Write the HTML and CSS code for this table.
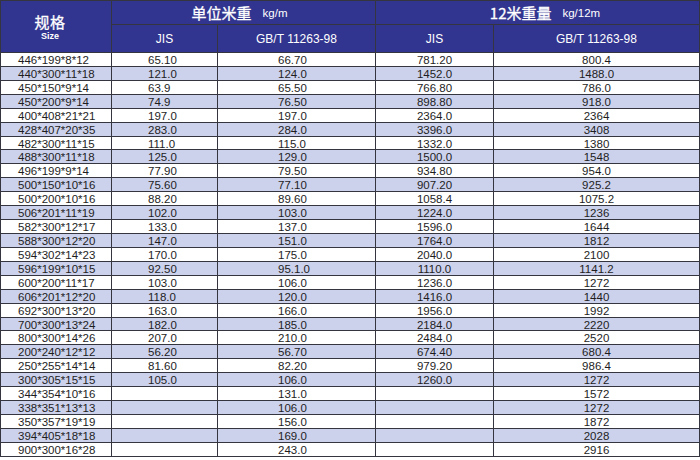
FILE: index.html
```html
<!DOCTYPE html>
<html lang="zh-CN">
<head>
<meta charset="utf-8">
<title>H型钢规格重量表</title>
<link rel="stylesheet" href="styles.css">
</head>
<body>
<div class="sheet">
  <div class="hd hd-size"><span class="cn">规格</span><span class="en">Size</span></div>
  <div class="hd hd-g1"><span class="cn">单位米重</span><span class="unit">kg/m</span></div>
  <div class="hd hd-g2"><span class="cn">12米重量</span><span class="unit">kg/12m</span></div>
  <div class="hd hd-sub">JIS</div>
  <div class="hd hd-sub">GB/T 11263-98</div>
  <div class="hd hd-sub">JIS</div>
  <div class="hd hd-sub">GB/T 11263-98</div>

  <div class="row"><div class="c1">446*199*8*12</div><div class="c2">65.10</div><div class="c3">66.70</div><div class="c4">781.20</div><div class="c5">800.4</div></div>
  <div class="row alt"><div class="c1">440*300*11*18</div><div class="c2">121.0</div><div class="c3">124.0</div><div class="c4">1452.0</div><div class="c5">1488.0</div></div>
  <div class="row"><div class="c1">450*150*9*14</div><div class="c2">63.9</div><div class="c3">65.50</div><div class="c4">766.80</div><div class="c5">786.0</div></div>
  <div class="row alt"><div class="c1">450*200*9*14</div><div class="c2">74.9</div><div class="c3">76.50</div><div class="c4">898.80</div><div class="c5">918.0</div></div>
  <div class="row"><div class="c1">400*408*21*21</div><div class="c2">197.0</div><div class="c3">197.0</div><div class="c4">2364.0</div><div class="c5">2364</div></div>
  <div class="row alt"><div class="c1">428*407*20*35</div><div class="c2">283.0</div><div class="c3">284.0</div><div class="c4">3396.0</div><div class="c5">3408</div></div>
  <div class="row"><div class="c1">482*300*11*15</div><div class="c2">111.0</div><div class="c3">115.0</div><div class="c4">1332.0</div><div class="c5">1380</div></div>
  <div class="row alt"><div class="c1">488*300*11*18</div><div class="c2">125.0</div><div class="c3">129.0</div><div class="c4">1500.0</div><div class="c5">1548</div></div>
  <div class="row"><div class="c1">496*199*9*14</div><div class="c2">77.90</div><div class="c3">79.50</div><div class="c4">934.80</div><div class="c5">954.0</div></div>
  <div class="row alt"><div class="c1">500*150*10*16</div><div class="c2">75.60</div><div class="c3">77.10</div><div class="c4">907.20</div><div class="c5">925.2</div></div>
  <div class="row"><div class="c1">500*200*10*16</div><div class="c2">88.20</div><div class="c3">89.60</div><div class="c4">1058.4</div><div class="c5">1075.2</div></div>
  <div class="row alt"><div class="c1">506*201*11*19</div><div class="c2">102.0</div><div class="c3">103.0</div><div class="c4">1224.0</div><div class="c5">1236</div></div>
  <div class="row"><div class="c1">582*300*12*17</div><div class="c2">133.0</div><div class="c3">137.0</div><div class="c4">1596.0</div><div class="c5">1644</div></div>
  <div class="row alt"><div class="c1">588*300*12*20</div><div class="c2">147.0</div><div class="c3">151.0</div><div class="c4">1764.0</div><div class="c5">1812</div></div>
  <div class="row"><div class="c1">594*302*14*23</div><div class="c2">170.0</div><div class="c3">175.0</div><div class="c4">2040.0</div><div class="c5">2100</div></div>
  <div class="row alt"><div class="c1">596*199*10*15</div><div class="c2">92.50</div><div class="c3">95.1.0</div><div class="c4">1110.0</div><div class="c5">1141.2</div></div>
  <div class="row"><div class="c1">600*200*11*17</div><div class="c2">103.0</div><div class="c3">106.0</div><div class="c4">1236.0</div><div class="c5">1272</div></div>
  <div class="row alt"><div class="c1">606*201*12*20</div><div class="c2">118.0</div><div class="c3">120.0</div><div class="c4">1416.0</div><div class="c5">1440</div></div>
  <div class="row"><div class="c1">692*300*13*20</div><div class="c2">163.0</div><div class="c3">166.0</div><div class="c4">1956.0</div><div class="c5">1992</div></div>
  <div class="row alt"><div class="c1">700*300*13*24</div><div class="c2">182.0</div><div class="c3">185.0</div><div class="c4">2184.0</div><div class="c5">2220</div></div>
  <div class="row"><div class="c1">800*300*14*26</div><div class="c2">207.0</div><div class="c3">210.0</div><div class="c4">2484.0</div><div class="c5">2520</div></div>
  <div class="row alt"><div class="c1">200*240*12*12</div><div class="c2">56.20</div><div class="c3">56.70</div><div class="c4">674.40</div><div class="c5">680.4</div></div>
  <div class="row"><div class="c1">250*255*14*14</div><div class="c2">81.60</div><div class="c3">82.20</div><div class="c4">979.20</div><div class="c5">986.4</div></div>
  <div class="row alt"><div class="c1">300*305*15*15</div><div class="c2">105.0</div><div class="c3">106.0</div><div class="c4">1260.0</div><div class="c5">1272</div></div>
  <div class="row"><div class="c1">344*354*10*16</div><div class="c2"></div><div class="c3">131.0</div><div class="c4"></div><div class="c5">1572</div></div>
  <div class="row alt"><div class="c1">338*351*13*13</div><div class="c2"></div><div class="c3">106.0</div><div class="c4"></div><div class="c5">1272</div></div>
  <div class="row"><div class="c1">350*357*19*19</div><div class="c2"></div><div class="c3">156.0</div><div class="c4"></div><div class="c5">1872</div></div>
  <div class="row alt"><div class="c1">394*405*18*18</div><div class="c2"></div><div class="c3">169.0</div><div class="c4"></div><div class="c5">2028</div></div>
  <div class="row"><div class="c1">900*300*16*28</div><div class="c2"></div><div class="c3">243.0</div><div class="c4"></div><div class="c5">2916</div></div>
</div>
</body>
</html>
```

FILE: styles.css
```css
html, body {
  margin: 0;
  padding: 0;
  background: #ffffff;
}

body {
  font-family: "Liberation Sans", Arial, sans-serif;
  color: #1e1e1e;
}

.sheet {
  width: 698px;
  padding: 1px;
  display: grid;
  grid-template-columns: 110px 105px 157px 117px 205px;
  grid-template-rows: 23px 27px;
  grid-auto-rows: 12.93px;
  gap: 1px;
  background: #35353f;
}

.hd {
  background: #32358f;
  color: #ffffff;
  display: flex;
  align-items: center;
  justify-content: center;
}

.hd-size {
  grid-row: 1 / 3;
  grid-column: 1;
  flex-direction: column;
  padding-right: 12px;
  padding-top: 1px;
}

.hd-size .cn {
  font-family: "Noto Sans CJK SC", sans-serif;
  font-weight: 400;
  font-size: 15.5px;
  line-height: 15px;
  letter-spacing: 0.5px;
  -webkit-text-stroke: 0.3px #ffffff;
}

.hd-size .en {
  font-family: "Liberation Sans", Arial, sans-serif;
  font-weight: 700;
  font-size: 9px;
  line-height: 9px;
  margin-top: 3px;
}

.hd-g1 {
  grid-column: 2 / 4;
  padding-right: 8px;
}

.hd-g2 {
  grid-column: 4 / 6;
  padding-left: 15px;
}

.hd .cn {
  font-family: "Noto Sans CJK SC", sans-serif;
  font-weight: 400;
  font-size: 15px;
  -webkit-text-stroke: 0.3px #ffffff;
}

.hd .unit {
  font-family: "Liberation Sans", Arial, sans-serif;
  font-size: 11.5px;
  margin-left: 11px;
}

.hd-sub {
  font-size: 12px;
}

.row {
  display: contents;
}

.row > div {
  background: #ffffff;
  font-size: 11.5px;
  line-height: 15px;
  white-space: nowrap;
  overflow: hidden;
}

.row.alt > div {
  background: #cdd2ec;
}

.c1 {
  padding-left: 17px;
}

.c2 {
  padding-left: 36px;
}

.c3 {
  padding-left: 60px;
}

.c4,
.c5 {
  text-align: center;
}
```
